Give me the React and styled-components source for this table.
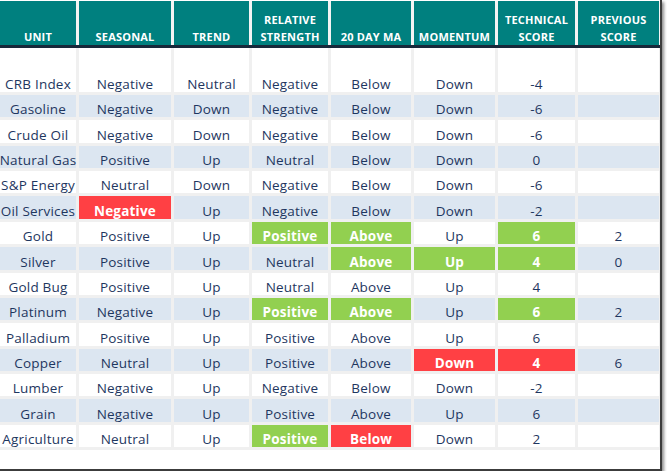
import React from "react";
import styled, { createGlobalStyle } from "styled-components";

const columns = [
  "UNIT",
  "SEASONAL",
  "TREND",
  "RELATIVE STRENGTH",
  "20 DAY MA",
  "MOMENTUM",
  "TECHNICAL SCORE",
  "PREVIOUS SCORE",
];

// "g" = green flag, "r" = red flag
const rows = [
  ["CRB Index", "Negative", "Neutral", "Negative", "Below", "Down", "-4", ""],
  ["Gasoline", "Negative", "Down", "Negative", "Below", "Down", "-6", ""],
  ["Crude Oil", "Negative", "Down", "Negative", "Below", "Down", "-6", ""],
  ["Natural Gas", "Positive", "Up", "Neutral", "Below", "Down", "0", ""],
  ["S&P Energy", "Neutral", "Down", "Negative", "Below", "Down", "-6", ""],
  ["Oil Services", ["Negative", "r"], "Up", "Negative", "Below", "Down", "-2", ""],
  ["Gold", "Positive", "Up", ["Positive", "g"], ["Above", "g"], "Up", ["6", "g"], "2"],
  ["Silver", "Positive", "Up", "Neutral", ["Above", "g"], ["Up", "g"], ["4", "g"], "0"],
  ["Gold Bug", "Positive", "Up", "Neutral", "Above", "Up", "4", ""],
  ["Platinum", "Negative", "Up", ["Positive", "g"], ["Above", "g"], "Up", ["6", "g"], "2"],
  ["Palladium", "Positive", "Up", "Positive", "Above", "Up", "6", ""],
  ["Copper", "Neutral", "Up", "Positive", "Above", ["Down", "r"], ["4", "r"], "6"],
  ["Lumber", "Negative", "Up", "Negative", "Below", "Down", "-2", ""],
  ["Grain", "Negative", "Up", "Positive", "Above", "Up", "6", ""],
  ["Agriculture", "Neutral", "Up", ["Positive", "g"], ["Below", "r"], "Down", "2", ""],
];

export default function App() {
  return (
    <>
      <GlobalStyle />
      <Frame>
        <HeadGrid>
          {columns.map((c) => (
            <HeadCell key={c}>{c}</HeadCell>
          ))}
        </HeadGrid>
        <Divider />
        <BodyGrid>
          {rows.map((row, r) =>
            row.map((cell, c) => {
              const [text, flag] = Array.isArray(cell) ? cell : [cell, null];
              return (
                <Cell key={r + "-" + c} $striped={r % 2 === 1} $flag={flag}>
                  {text}
                </Cell>
              );
            })
          )}
        </BodyGrid>
        <Spacer />
      </Frame>
    </>
  );
}

const GlobalStyle = createGlobalStyle`
  body {
    margin: 0;
    background: #ffffff;
    font-family: "Open Sans", "Liberation Sans", sans-serif;
  }
`;

const Frame = styled.div`
  width: 660px;
  padding-top: 1px;
  background: #ffffff;
  border-right: 2px solid #3c3c3c;
  border-bottom: 2px solid #3c3c3c;
  box-shadow: 2px 2px 3px rgba(0, 0, 0, 0.45);
`;

const gridCols = "76px 92px 75px 76px 80px 81px 77px 81px";

const HeadGrid = styled.div`
  display: grid;
  grid-template-columns: ${gridCols};
  column-gap: 3px;
  height: 44px;
  background: #f4f4f4;
`;

const HeadCell = styled.div`
  display: flex;
  align-items: flex-end;
  justify-content: center;
  text-align: center;
  background: #00807f;
  color: #ffffff;
  font-size: 11px;
  font-weight: 700;
  line-height: 17px;
  letter-spacing: 0.2px;
  padding: 0 2px;
`;

const Divider = styled.div`
  height: 3px;
  background: #18283a;
`;

const BodyGrid = styled.div`
  display: grid;
  grid-template-columns: ${gridCols};
  grid-template-rows: 44px repeat(14, 22.36px);
  gap: 3px;
  padding: 0 1px 3px 0;
  background: #f0f0f0;
`;

const flagBg = { g: "#92d050", r: "#ff4044" };

const Cell = styled.div`
  display: flex;
  align-items: flex-end;
  justify-content: center;
  white-space: nowrap;
  font-size: 13.5px;
  line-height: 16px;
  letter-spacing: 0.2px;
  color: ${(p) => (p.$flag ? "#ffffff" : "#1e3660")};
  font-weight: ${(p) => (p.$flag ? 700 : 400)};
  background: ${(p) =>
    p.$flag ? flagBg[p.$flag] : p.$striped ? "#dce6f1" : "#ffffff"};
`;

const Spacer = styled.div`
  height: 19px;
`;
